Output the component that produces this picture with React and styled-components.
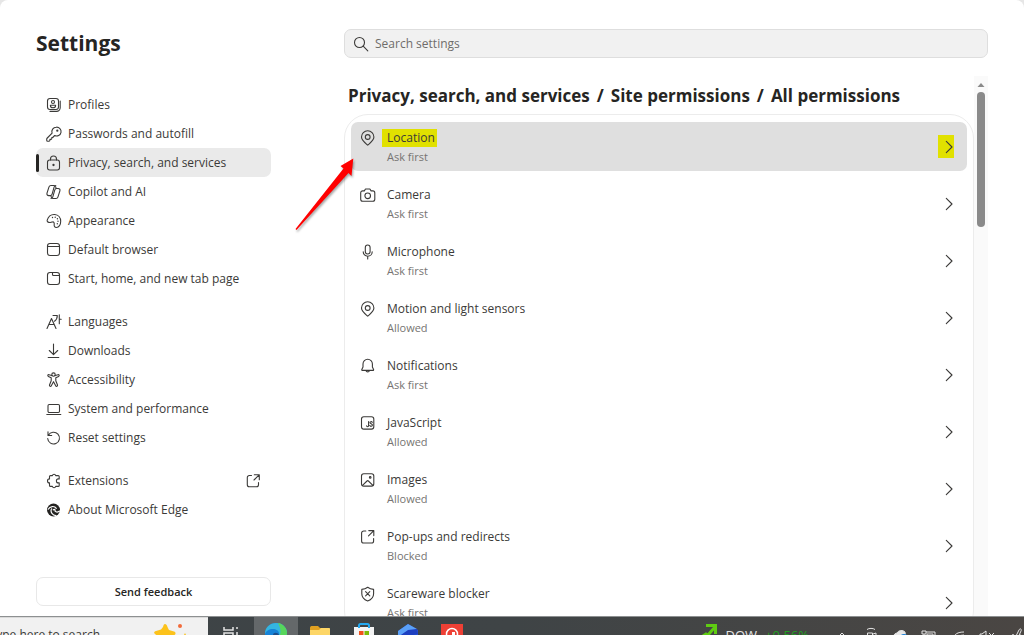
import React from 'react'
import styled, { createGlobalStyle } from 'styled-components'

const Icon = ({ children, size = 16 }) => (
    <Svg width={size} height={size} viewBox="0 0 16 16" aria-hidden="true">{children}</Svg>
)

const icons = {
    profiles: <>
        <rect x="1.5" y="1.5" width="11" height="11" rx="2.5" />
        <path d="M14.2 4v6.8a3.6 3.6 0 0 1-3.6 3.6H4" />
        <circle cx="7" cy="5" r="1.5" />
        <path d="M4.4 8.2h5.2v.5c0 1.3-1.1 2-2.6 2s-2.6-.7-2.6-2z" />
    </>,
    key: <>
        <path d="M10.2 1.2a4.4 4.4 0 0 0-4.1 5.9L1.3 12c-.4.4-.6.8-.6 1.3v.9c0 .6.4 1 1 1H3c.5 0 .9-.4.9-.9v-.9h1c.5 0 .9-.4.9-.9v-1h.9l2-2a4.4 4.4 0 1 0 1.5-8.3z" />
        <circle cx="11.3" cy="4.7" r=".6" />
    </>,
    lock: <>
        <rect x="1.5" y="5" width="12" height="10" rx="2.2" />
        <path d="M4.5 5V4a3 3 0 0 1 6 0v1" />
        <circle cx="7.5" cy="10" r=".6" fill="currentColor" />
    </>,
    copilot: <>
        <path d="M10.2 4.5 9.5 2.4A1.8 1.8 0 0 0 7.8 1.5H4.9c-.9 0-1.6.6-1.9 1.4L1 9.2c-.4 1.3.4 2.4 1.7 2.4h1.6c.9 0 1.6-.6 1.8-1.4l2-7c.3-1 .8-1.7 1.7-1.7" />
        <path d="M4.8 11.6l.6 1.7c.3.8.9 1.2 1.7 1.2h2.9c.9 0 1.6-.5 1.9-1.4l2-6.3c.4-1.2-.4-2.3-1.7-2.3h-1.6c-.9 0-1.6.5-1.8 1.4l-2 7c-.3 1-.9 1.6-1.8 1.6" />
    </>,
    palette: <>
        <path d="M1.2 7.2C2.3 3.5 5.3 1.3 8.7 1.5c3.6.3 6 3.2 6 6.7 0 3.5-1.7 6.300-4.300 6.300-1.900 0-2.400-1.500-2.200-3.100.2-1.700-.4-2.600-1.500-2.500-1.500.1-2.300.8-3.700.5C1.600 9.200.9 8.300 1.200 7.200z" />
        <path d="M6.500 4.500h.01M9.200 4.300h.01M11.400 5.800h.01M12 8.300h.01M11.300 10.800h.01" strokeWidth="1.400" />
    </>,
    browser: <>
        <rect x="1.500" y="1.500" width="12" height="12" rx="2.500" />
        <path d="M1.500 4.500h12" />
    </>,
    tab: <>
        <rect x="1.500" y="1.500" width="12" height="12" rx="2.500" />
        <path d="M6.500 1.500v2a1 1 0 0 0 1 1h6" />
    </>,
    languages: <>
        <path d="M1 14.500l4.500-10 4.500 10M2.800 10.500h5.400" />
        <path d="M7 1.500h4.300c0 2.500-1 4.500-2.800 5.700M13.300.8v9M13.300 5.200h1.900" />
    </>,
    download: <path d="M7.500 1v10.500M3.300 7.500l4.200 4.200 4.200-4.200M2.200 14.500h10.600" />,
    accessibility: <>
        <circle cx="7.500" cy="2.600" r="1.700" />
        <path d="M5.800 3.600 3 2.700c-1.200-.3-1.700 1.200-.6 1.700l2.800 1.300v3L3.500 13c-.4 1.400 1.300 1.900 1.800.7l2.200-4 2.200 4c.5 1.200 2.200.7 1.800-.7L9.800 8.700v-3l2.800-1.300c1.100-.5.600-2-.6-1.700l-2.800.9" />
    </>,
    laptop: <>
        <rect x="2" y="3.500" width="11.500" height="8" rx="1.200" />
        <path d="M.8 13.500h14" />
    </>,
    reset: <path d="M2 1.800v3.700h3.700M2.400 5.300a5.900 5.900 0 1 1-.7 3.200" />,
    puzzle: <path d="M4.500 2.600h1.900a1.700 1.700 0 0 1 3.300 0h2.500c.6 0 1 .4 1 1v2.300h-.8a2 2 0 0 0 0 4h.8v2.500c0 .6-.4 1-1 1H9.700a1.700 1.700 0 0 1-3.300 0H4.500c-.6 0-1-.4-1-1v-2.500a2 2 0 0 1 0-4V3.600c0-.6.4-1 1-1z" />,
    edge: <>
        <circle cx="7.500" cy="8" r="6.500" fill="#242321" stroke="none" />
        <path d="M2.200 7.200C4 4 8.500 3.600 10.300 6.300M5.600 6.800c-1.800 3.200 1.200 6.500 4.300 6.800M7.300 7.800c1-.9 2.200 0 1.600 1.100 1 1.200 3.200 1.300 5 .2" stroke="#fff" strokeWidth="1.200" />
    </>,
    external: <path d="M6.500 2.500H4.300a2 2 0 0 0-2 2v7.200a2 2 0 0 0 2 2h7.200a2 2 0 0 0 2-2V9.500M9.300 1.700h5v5M14.100 1.900 9 7" />,
    search: <>
        <circle cx="6.500" cy="6.500" r="5" />
        <path d="M10.200 10.200l4.600 4.600" />
    </>,
    pin: <>
        <path d="M7.700 15.200C5 12.800 1.500 10.200 1.500 7a6.200 6.200 0 0 1 12.400 0c0 3.200-3.500 5.800-6.200 8.200z" />
        <circle cx="7.700" cy="7" r="2.400" />
    </>,
    camera: <>
        <path d="M5.500 2h4.400l1.200 1.900h1.700a2 2 0 0 1 2 2v6.300a2 2 0 0 1-2 2H2.700a2 2 0 0 1-2-2V5.900a2 2 0 0 1 2-2h1.600z" />
        <circle cx="7.700" cy="8.800" r="2.800" />
    </>,
    mic: <>
        <rect x="5.300" y="1" width="4.800" height="9" rx="2.400" />
        <path d="M3.200 7.800a4.500 4.500 0 0 0 9 0M7.700 12.400v2.600" />
    </>,
    bell: <path d="M7.700 1.200A4.700 4.700 0 0 0 3 5.900v3.200l-1.200 2.400c-.2.500.1.900.6.900h10.600c.5 0 .8-.4.6-.9l-1.200-2.400V5.900a4.700 4.700 0 0 0-4.700-4.700zM5.900 12.600a1.900 1.900 0 0 0 3.600 0" />,
    script: <>
        <rect x="1.500" y="1.800" width="12.300" height="12.300" rx="2.300" />
        <path d="M8.600 6.500v4.300c0 1.200-2 1.200-2 0M12.300 7.300c-.6-1-2.400-.8-2.300.4.100 1.300 2.400.9 2.400 2.400 0 1.500-2.100 1.600-2.600.5" />
    </>,
    image: <>
        <rect x="1.500" y="1.800" width="12.300" height="12.300" rx="2.300" />
        <circle cx="10.200" cy="5.400" r=".8" />
        <path d="M2.500 13.300 7 9a1 1 0 0 1 1.400 0l4.500 4.300" />
    </>,
    popup: <path d="M5.800 2H3.700a2.100 2.100 0 0 0-2.100 2.100v7.800A2.100 2.100 0 0 0 3.700 14h7.800a2.100 2.100 0 0 0 2.100-2.100V9.500M8.800 1.600h5v5M13.600 1.800 8.500 6.900" />,
    shield: <>
        <path d="M7.700 1.200c1.700 1.300 3.600 2 5.900 2.200v4.300c0 3.400-2 5.800-5.900 7.200-3.900-1.400-5.900-3.800-5.900-7.200V3.400c2.300-.2 4.200-.9 5.900-2.200z" />
        <path d="M5.600 5.700l4.200 4.200M9.800 5.700 5.600 9.900" />
    </>,
    chevron: <path d="M8.300 2.300 14 8l-5.700 5.700" />,
}

const navGroups = [
    [
        { icon: 'profiles', label: 'Profiles' },
        { icon: 'key', label: 'Passwords and autofill' },
        { icon: 'lock', label: 'Privacy, search, and services', active: true },
        { icon: 'copilot', label: 'Copilot and AI' },
        { icon: 'palette', label: 'Appearance' },
        { icon: 'browser', label: 'Default browser' },
        { icon: 'tab', label: 'Start, home, and new tab page' },
    ],
    [
        { icon: 'languages', label: 'Languages' },
        { icon: 'download', label: 'Downloads' },
        { icon: 'accessibility', label: 'Accessibility' },
        { icon: 'laptop', label: 'System and performance' },
        { icon: 'reset', label: 'Reset settings' },
    ],
    [
        { icon: 'puzzle', label: 'Extensions', external: true },
        { icon: 'edge', label: 'About Microsoft Edge' },
    ],
]

const permissions = [
    { icon: 'pin', label: 'Location', state: 'Ask first', marked: true },
    { icon: 'camera', label: 'Camera', state: 'Ask first' },
    { icon: 'mic', label: 'Microphone', state: 'Ask first' },
    { icon: 'pin', label: 'Motion and light sensors', state: 'Allowed' },
    { icon: 'bell', label: 'Notifications', state: 'Ask first' },
    { icon: 'script', label: 'JavaScript', state: 'Allowed' },
    { icon: 'image', label: 'Images', state: 'Allowed' },
    { icon: 'popup', label: 'Pop-ups and redirects', state: 'Blocked' },
    { icon: 'shield', label: 'Scareware blocker', state: 'Ask first' },
]

function Sidebar() {
    return (
        <SidebarColumn>
            <Title>Settings</Title>
            <Nav aria-label="Settings sections">
                {navGroups.map((group, i) => (
                    <ul key={i}>
                        {group.map((item) => (
                            <li key={item.label}>
                                <NavLink href="#" $active={item.active} aria-current={item.active ? 'page' : undefined}>
                                    <Icon>{icons[item.icon]}</Icon>
                                    <NavText>{item.label}</NavText>
                                    {item.external && <Icon>{icons.external}</Icon>}
                                </NavLink>
                            </li>
                        ))}
                    </ul>
                ))}
            </Nav>
            <FeedbackButton type="button">Send feedback</FeedbackButton>
        </SidebarColumn>
    )
}

function PermissionRow({ item }) {
    return (
        <li>
            <RowButton type="button" $marked={item.marked}>
                <RowIcon>
                    <Icon>{icons[item.icon]}</Icon>
                </RowIcon>
                <RowText>
                    <RowLabel>{item.marked ? <Highlight>{item.label}</Highlight> : item.label}</RowLabel>
                    <RowState>{item.state}</RowState>
                </RowText>
                <ChevronBox $marked={item.marked}>
                    <Icon>{icons.chevron}</Icon>
                </ChevronBox>
            </RowButton>
        </li>
    )
}

function Content() {
    return (
        <Main>
            <SearchBox>
                <Icon>{icons.search}</Icon>
                <SearchInput type="text" placeholder="Search settings" aria-label="Search settings" />
            </SearchBox>
            <ScrollArea>
                <ScrollContent>
                    <Breadcrumb>
                        <Crumb href="#">Privacy, search, and services</Crumb>
                        <span>/</span>
                        <Crumb href="#">Site permissions</Crumb>
                        <span>/</span>
                        <span>All permissions</span>
                    </Breadcrumb>
                    <Card>
                        <RowList>
                            {permissions.map((item) => <PermissionRow key={item.label} item={item} />)}
                        </RowList>
                        <Pointer width="64" height="80" viewBox="0 0 64 80" aria-hidden="true">
                            <path d="M60.300 4.500 47.500 12l3 2.500L2.500 75l1 1L55.500 19l3 3z" fill="#ff0000" />
                        </Pointer>
                    </Card>
                </ScrollContent>
                <ScrollTrack>
                    <ScrollArrow width="8" height="4" viewBox="0 0 8 4" aria-hidden="true">
                        <path d="M4 0l3.500 4h-7z" fill="#8a8a8a" />
                    </ScrollArrow>
                    <ScrollThumb />
                </ScrollTrack>
            </ScrollArea>
        </Main>
    )
}

function TaskBar() {
    return (
        <Bar>
            <BarSearch type="button">
                <BarSearchText>Type here to search</BarSearchText>
                <svg width="36" height="24" viewBox="0 0 36 24" aria-hidden="true">
                    <path d="M12 0c1 0 2 1 2.500 3l1.500 3 5 1.500c2 .8 2 2.500.5 3.500L17 14l1 7-6-3-6 3 1-7-5-4c-1.500-1.200-1-2.500 1-3l5-1.500L10 3c.5-2 1-3 2-3z" fill="#fcc21b" />
                    <circle cx="27" cy="2" r="2" fill="#f26b3a" />
                    <path d="M32 9l1 2 2 1-2 1-1 2-1-2-2-1 2-1z" fill="#fcc21b" />
                </svg>
            </BarSearch>
            <AppButton type="button" $wide aria-label="Task view">
                <svg width="22" height="22" viewBox="0 0 22 22" fill="none" stroke="#e4e4e4" strokeWidth="1.500" aria-hidden="true">
                    <path d="M4 4v3h9V4M4 20v-3h9v3M4 10h9v4H4zM17 4v2M17 9v11" />
                </svg>
            </AppButton>
            <AppButton type="button" $open aria-label="Microsoft Edge">
                <svg width="22" height="22" viewBox="0 0 22 22" aria-hidden="true">
                    <circle cx="11" cy="11" r="11" fill="#1683d8" />
                    <path d="M0 11C0 4 5 0 11 0c7 0 11 5 11 10 0 3-2 5-5 5s-4-1-3-3c1-4-3-6-6-6-4 0-7 2-8 5z" fill="#35b5e0" />
                    <path d="M13 0c6 1 9 6 9 10 0 3-2 5-5 5-2 0-3-1-3-2 3-4 1-9-1-13z" fill="#57d65b" />
                    <path d="M8 12c0-3 5-3 6 0-1 2 0 4 3 5-5 2-9-1-9-5z" fill="#1b4f8b" />
                </svg>
            </AppButton>
            <AppButton type="button" aria-label="File Explorer">
                <svg width="22" height="22" viewBox="0 0 22 22" aria-hidden="true">
                    <path d="M1 5c0-1 .5-2 1.500-2H9l2 2h9v5H1z" fill="#e0a021" />
                    <path d="M1 7h9l2-2h8c.600 0 1 .4 1 1v14H1z" fill="#fdd667" />
                    <path d="M6 13h10v8H6z" fill="#4a9ee0" />
                </svg>
            </AppButton>
            <AppButton type="button" aria-label="Microsoft Store">
                <svg width="22" height="22" viewBox="0 0 22 22" aria-hidden="true">
                    <path d="M1 4h20v16H1z" fill="#f4f4f4" />
                    <path d="M6 5V2.500C6 1.500 6.500 1 7.500 1h7c1 0 1.500.5 1.500 1.500V5" fill="none" stroke="#23a9f2" strokeWidth="2" />
                    <path d="M6 8h4.500v4.500H6z" fill="#f1511b" />
                    <path d="M11.500 8H16v4.500h-4.500z" fill="#80bc06" />
                </svg>
            </AppButton>
            <AppButton type="button" aria-label="Viewer">
                <svg width="22" height="22" viewBox="0 0 22 22" aria-hidden="true">
                    <path d="M11 1l10 6v9l-10 6-10-6V8z" fill="#2452d6" />
                    <path d="M11 1l9 5-9 3-7 5-3-2V8z" fill="#5aa0f8" />
                    <path d="M20 6l1 5-10 2-6 5-4-4 10-7z" fill="#1d3fc0" />
                </svg>
            </AppButton>
            <AppButton type="button" aria-label="Recorder">
                <svg width="22" height="22" viewBox="0 0 22 22" aria-hidden="true">
                    <path d="M0 1h22v21H0z" fill="#ee4035" />
                    <circle cx="11" cy="11" r="5.500" fill="none" stroke="#fff" strokeWidth="1.500" />
                    <path d="M11 9h3v4h-3z" fill="#fff" />
                </svg>
            </AppButton>
            <Tray>
                <Ticker>
                    <svg width="18" height="20" viewBox="0 0 18 20" fill="none" stroke="#5fcc12" strokeWidth="3" aria-hidden="true">
                        <path d="M0 15l6-4 2 1 7-8M6 2.500h9.500V11" />
                    </svg>
                    <span>DOW</span>
                    <Change>+0.56%</Change>
                </Ticker>
                <TrayIcon viewBox="0 0 16 16"><path d="M4 10l4-4 4 4" /></TrayIcon>
                <TrayIcon viewBox="0 0 16 16"><path d="M4 2.500c2-1.500 6-1.500 8 0M4.500 6h5v8h-5zM10 7l3-1v7" /></TrayIcon>
                <TrayIcon viewBox="0 0 16 16">
                    <path d="M2 12a4 4 0 0 1 3-6 5 5 0 0 1 8-1l1 7z" fill="#e8e8e8" />
                    <circle cx="12" cy="11" r="4" fill="#1a7fd6" stroke="none" />
                </TrayIcon>
                <TrayIcon viewBox="0 0 16 16"><path d="M1 4h4v3H1zM5 5h9v7H3V7M6 7h6v3H6z" /></TrayIcon>
                <TrayIcon viewBox="0 0 16 16"><path d="M3 12C4 7 8 5 14 5M6 13c1-3 4-5 8-5M9 14c1-2 3-3 5-3" /></TrayIcon>
                <TrayIcon viewBox="0 0 16 16"><path d="M1 7h2l4-3v10l-4-3H1zM10 6l5 5M15 6l-5 5" /></TrayIcon>
                <TrayIcon viewBox="0 0 16 16"><path d="M6 13l5-10c1-2 3-1 2 1L9 13M3 10c0-2 2-3 3-2M12 8c2 0 3 2 1 4" /></TrayIcon>
            </Tray>
        </Bar>
    )
}

function App() {
    return (
        <>
            <GlobalStyle />
            <Screen>
                <SettingsPage>
                    <Sidebar />
                    <Content />
                </SettingsPage>
                <TaskBar />
            </Screen>
        </>
    )
}

export default App

const GlobalStyle = createGlobalStyle`
    * {
        box-sizing: border-box;
    }

    body {
        margin: 0;
        background: #e6e6e6;
        color: #3b3a38;
        font-family: 'Open Sans', 'Noto Sans', sans-serif;
        font-size: 12px;
    }

    button,
    input {
        font: inherit;
        color: inherit;
    }

    ul {
        list-style: none;
        margin: 0;
        padding: 0;
    }
`

const Svg = styled.svg`
    flex: none;
    fill: none;
    stroke: currentColor;
    stroke-width: 1.1;
    stroke-linecap: round;
    stroke-linejoin: round;
`

const Screen = styled.div`
    display: flex;
    flex-direction: column;
    height: 100vh;
    overflow: hidden;
`

const SettingsPage = styled.div`
    display: grid;
    grid-template-columns: 235px minmax(0, 1fr);
    column-gap: 73px;
    flex: 1;
    min-height: 0;
    padding: 29px 36px 0;
    background: #fff;
    border-radius: 8px 8px 0 0;
`

const SidebarColumn = styled.aside`
    display: flex;
    flex-direction: column;
    padding-bottom: 10px;
`

const Title = styled.h1`
    margin: 0 0 33px;
    font-size: 21px;
    line-height: 28px;
    font-weight: 700;
    color: #262523;
`

const Nav = styled.nav`
    display: flex;
    flex-direction: column;
    gap: 14px;
`

const NavLink = styled.a`
    display: flex;
    align-items: center;
    gap: 6px;
    height: 29px;
    padding: 0 10px;
    border-radius: 7px;
    background: ${({ $active }) => ($active ? '#eaeaea' : 'transparent')};
    color: inherit;
    text-decoration: none;

    &::before {
        content: '';
        display: ${({ $active }) => ($active ? 'block' : 'none')};
        width: 3px;
        height: 18px;
        margin: 0 1px 0 -10px;
        border-radius: 2px;
        background: #262523;
    }
`

const NavText = styled.span`
    flex: 1;
    line-height: 18px;
    white-space: nowrap;
`

const FeedbackButton = styled.button`
    height: 29px;
    margin-top: auto;
    border: 1px solid #e8e8e8;
    border-radius: 7px;
    background: #fff;
    color: #262523;
    font-size: 11px;
    font-weight: 600;
`

const Main = styled.main`
    display: flex;
    flex-direction: column;
    min-height: 0;
`

const SearchBox = styled.div`
    display: flex;
    flex: none;
    align-items: center;
    gap: 6px;
    height: 29px;
    margin-bottom: 18px;
    padding: 0 8px;
    border: 1px solid #dedede;
    border-radius: 7px;
    background: #f1f1f1;
`

const SearchInput = styled.input`
    flex: 1;
    min-width: 0;
    padding: 0;
    border: 0;
    outline: 0;
    background: transparent;

    &::placeholder {
        color: #6f6d6b;
        opacity: 1;
    }
`

// the left padding leaves room for the pointer that sticks out of the card
const ScrollArea = styled.div`
    display: flex;
    flex: 1;
    min-height: 0;
    overflow: hidden;
    margin-left: -60px;
    padding-left: 60px;
`

const ScrollContent = styled.div`
    flex: 1;
    min-width: 0;
    padding-top: 8px;
`

const Breadcrumb = styled.h2`
    display: flex;
    gap: 7px;
    margin: 0 0 6px;
    padding-left: 4px;
    font-size: 17px;
    line-height: 24px;
    font-weight: 700;
    color: #262523;
    white-space: nowrap;
`

const Crumb = styled.a`
    color: inherit;
    text-decoration: none;
`

const Card = styled.section`
    position: relative;
    padding: 7px 6px;
    border: 1px solid #ececec;
    border-radius: 24px;
`

const RowList = styled.ul`
    display: flex;
    flex-direction: column;
    gap: 8px;
`

const RowButton = styled.button`
    display: flex;
    align-items: flex-start;
    gap: 11px;
    width: 100%;
    height: 49px;
    padding: 7px 13px 7px 9px;
    border: 0;
    border-radius: 7px;
    background: ${({ $marked }) => ($marked ? '#dfdfdf' : 'transparent')};
    text-align: left;
`

const RowIcon = styled.span`
    display: flex;
    align-items: center;
    height: 18px;
`

const RowText = styled.span`
    display: flex;
    flex: 1;
    flex-direction: column;
    gap: 2px;
`

const RowLabel = styled.span`
    line-height: 18px;
`

const Highlight = styled.mark`
    display: inline-block;
    margin-left: -5px;
    padding: 0 2px 0 5px;
    background: #e1e100;
    color: inherit;
`

const RowState = styled.span`
    font-size: 11px;
    line-height: 16px;
    color: #767472;
`

const ChevronBox = styled.span`
    display: flex;
    align-items: center;
    align-self: center;
    height: 23px;
    background: ${({ $marked }) => ($marked ? '#e1e100' : 'transparent')};
`

const Pointer = styled.svg`
    position: absolute;
    top: 39px;
    left: -52px;
    filter: drop-shadow(1px 2px 1px rgba(0, 0, 0, 0.35));
`

const ScrollTrack = styled.div`
    display: flex;
    flex: none;
    flex-direction: column;
    align-items: center;
    gap: 5px;
    width: 14px;
    padding-top: 7px;
    background: #fafafa;
`

const ScrollArrow = styled.svg`
    flex: none;
`

const ScrollThumb = styled.div`
    width: 8px;
    height: 135px;
    border-radius: 4px;
    background: #8a8a8a;
`

// only the upper part of the bar stays on screen
const Bar = styled.footer`
    display: flex;
    flex: none;
    align-items: flex-start;
    height: 19px;
    overflow: hidden;
    border-top: 1px solid #8d9091;
    background: linear-gradient(90deg, #3d4346 0%, #3f4446 50%, #4a4643 100%);
`

const BarSearch = styled.button`
    display: flex;
    align-items: flex-start;
    gap: 53px;
    width: 208px;
    height: 38px;
    padding: 6px 0 0;
    border: 0;
    border-top: 1px solid #dadada;
    background: #f1f1f1;
`

const BarSearchText = styled.span`
    display: flex;
    justify-content: flex-end;
    width: 100px;
    padding-top: 2px;
    white-space: nowrap;
`

const AppButton = styled.button`
    display: flex;
    justify-content: center;
    width: ${({ $wide }) => ($wide ? '46px' : '44px')};
    height: 38px;
    padding: 6px 0 0;
    border: 0;
    background: ${({ $open }) => ($open ? '#64686a' : 'transparent')};
`

const Tray = styled.div`
    display: flex;
    align-items: flex-start;
    gap: 13px;
    margin-left: auto;
    padding-top: 6px;
    color: #e4e4e4;
`

const Ticker = styled.div`
    display: flex;
    gap: 8px;
    margin-right: 12px;
    font-size: 13px;
    line-height: 24px;
`

const Change = styled.span`
    color: #21a121;
`

const TrayIcon = styled.svg.attrs({ width: 16, height: 16, 'aria-hidden': true })`
    flex: none;
    margin-top: 4px;
    fill: none;
    stroke: #e4e4e4;
    stroke-width: 1;
`
